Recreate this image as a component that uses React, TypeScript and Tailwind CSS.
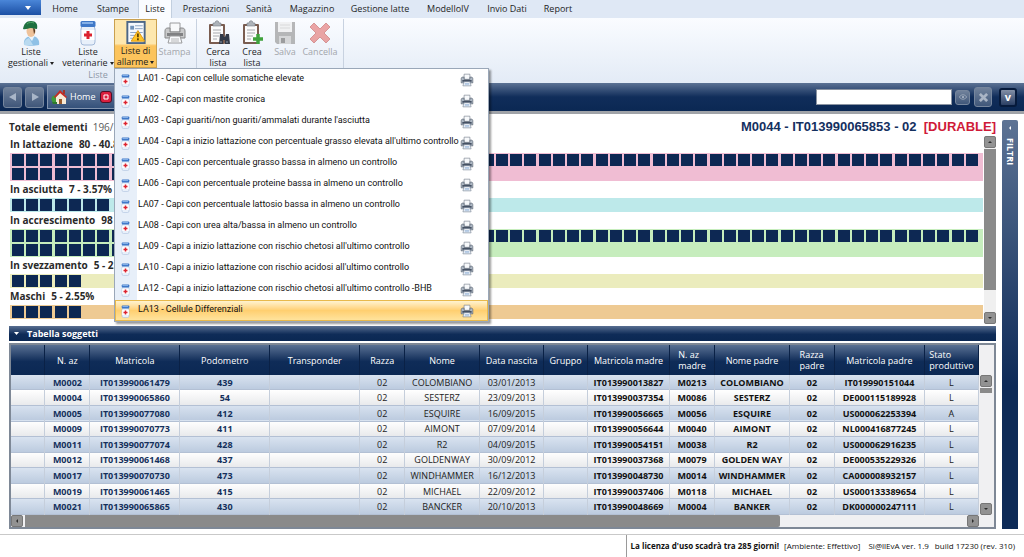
import { useState } from 'react';
import type { ReactNode } from 'react';

interface Group {
    label: string;
    stats: string;
    total: number;
    barClass: string;
}

interface Animal {
    id: string;
    tag: string;
    pedometer: string;
    name: string;
    born: string;
    damTag: string;
    damId: string;
    sire: string;
    sireTag: string;
    state: string;
}

const TABS = [
    { label: 'Home', width: 'w-[46px]' },
    { label: 'Stampe', width: 'w-[50px]' },
    { label: 'Liste', width: 'w-[34px]' },
    { label: 'Prestazioni', width: 'w-[68px]' },
    { label: 'Sanità', width: 'w-[38px]' },
    { label: 'Magazzino', width: 'w-[68px]' },
    { label: 'Gestione latte', width: 'w-[68px]' },
    { label: 'ModelloIV', width: 'w-[68px]' },
    { label: 'Invio Dati', width: 'w-[50px]' },
    { label: 'Report', width: 'w-[52px]' },
];

const ALERT_LISTS = [
    'LA01 - Capi con cellule somatiche elevate',
    'LA02 - Capi con mastite cronica',
    "LA03 - Capi guariti/non guariti/ammalati durante l'asciutta",
    "LA04 - Capi a inizio lattazione con percentuale grasso elevata all'ultimo controllo",
    'LA05 - Capi con percentuale grasso bassa in almeno un controllo',
    'LA06 - Capi con percentuale proteine bassa in almeno un controllo',
    'LA07 - Capi con percentuale lattosio bassa in almeno un controllo',
    'LA08 - Capi con urea alta/bassa in almeno un controllo',
    "LA09 - Capi a inizio lattazione con rischio chetosi all'ultimo controllo",
    "LA10 - Capi a inizio lattazione con rischio acidosi all'ultimo controllo",
    "LA12 - Capi a inizio lattazione con rischio chetosi all'ultimo controllo -BHB",
    'LA13 - Cellule Differenziali',
];

const GROUPS: Group[] = [
    { label: 'In lattazione', stats: '80 - 40.82%', total: 80, barClass: 'bg-[#f0bdd3]' },
    { label: 'In asciutta', stats: '7 - 3.57%', total: 7, barClass: 'bg-[#bde9ea]' },
    { label: 'In accrescimento', stats: '98 - 50%', total: 98, barClass: 'bg-[#c6edbd]' },
    { label: 'In svezzamento', stats: '5 - 2.55%', total: 5, barClass: 'bg-[#ebecbd]' },
    { label: 'Maschi', stats: '5 - 2.55%', total: 5, barClass: 'bg-[#eeca93]' },
];

const COLUMNS = [
    { label: '', width: 'w-[34px]' },
    { label: 'N. az', width: 'w-[45px]' },
    { label: 'Matricola', width: 'w-[90px]' },
    { label: 'Podometro', width: 'w-[90px]' },
    { label: 'Transponder', width: 'w-[90px]' },
    { label: 'Razza', width: 'w-[45px]' },
    { label: 'Nome', width: 'w-[75px]' },
    { label: 'Data nascita', width: 'w-[64px]' },
    { label: 'Gruppo', width: 'w-[44px]' },
    { label: 'Matricola madre', width: 'w-[82px]' },
    { label: 'N. az\nmadre', width: 'w-[45px]' },
    { label: 'Nome padre', width: 'w-[75px]' },
    { label: 'Razza\npadre', width: 'w-[45px]' },
    { label: 'Matricola padre', width: 'w-[90px]' },
    { label: 'Stato\nproduttivo', width: 'w-[54px]' },
];

const ANIMALS: Animal[] = [
    { id: 'M0002', tag: 'IT013990061479', pedometer: '439', name: 'COLOMBIANO', born: '03/01/2013', damTag: 'IT013990013827', damId: 'M0213', sire: 'COLOMBIANO', sireTag: 'IT019990151044', state: 'L' },
    { id: 'M0004', tag: 'IT013990065860', pedometer: '54', name: 'SESTERZ', born: '23/09/2013', damTag: 'IT013990037354', damId: 'M0086', sire: 'SESTERZ', sireTag: 'DE000115189928', state: 'L' },
    { id: 'M0005', tag: 'IT013990077080', pedometer: '412', name: 'ESQUIRE', born: '16/09/2015', damTag: 'IT013990056665', damId: 'M0056', sire: 'ESQUIRE', sireTag: 'US000062253394', state: 'A' },
    { id: 'M0009', tag: 'IT013990070773', pedometer: '411', name: 'AIMONT', born: '07/09/2014', damTag: 'IT013990056644', damId: 'M0040', sire: 'AIMONT', sireTag: 'NL000416877245', state: 'L' },
    { id: 'M0011', tag: 'IT013990077074', pedometer: '428', name: 'R2', born: '04/09/2015', damTag: 'IT013990054151', damId: 'M0038', sire: 'R2', sireTag: 'US000062916235', state: 'L' },
    { id: 'M0012', tag: 'IT013990061468', pedometer: '437', name: 'GOLDENWAY', born: '30/09/2012', damTag: 'IT013990037368', damId: 'M0079', sire: 'GOLDEN WAY', sireTag: 'DE000535229326', state: 'L' },
    { id: 'M0017', tag: 'IT013990070730', pedometer: '473', name: 'WINDHAMMER', born: '16/12/2013', damTag: 'IT013990048730', damId: 'M0014', sire: 'WINDHAMMER', sireTag: 'CA000008932157', state: 'L' },
    { id: 'M0019', tag: 'IT013990061465', pedometer: '415', name: 'MICHAEL', born: '22/09/2012', damTag: 'IT013990037406', damId: 'M0118', sire: 'MICHAEL', sireTag: 'US000133389654', state: 'L' },
    { id: 'M0021', tag: 'IT013990065865', pedometer: '430', name: 'BANCKER', born: '20/10/2013', damTag: 'IT013990048669', damId: 'M0004', sire: 'BANKER', sireTag: 'DK000000247111', state: 'L' },
];

function FarmerIcon() {
    return (
        <svg viewBox="0 0 24 26" className="h-[26px] w-6">
            <path d="M5 25c-1-6 3-9 8-9s8 4 7 9c-4 1-11 1-15 0z" fill="#8fc1e6" />
            <path d="M9 16l4 5 3-6z" fill="#eef5fb" />
            <path d="M5 25c0-4 2-6 5-7l4 7z" fill="#b9daf0" />
            <ellipse cx="12" cy="11" rx="4.5" ry="6" fill="#eec29a" />
            <path d="M14 8c2 0 3 3 1 6z" fill="#5a3a22" />
            <path d="M4 9C5 4 7 1 12 1c5 0 7 3 6 8-3 0-4-1-6-1-3 0-5 2-8 1z" fill="#1e7040" />
            <path d="M8 4c2-2 5-2 7-1" stroke="#4fa468" fill="none" />
        </svg>
    );
}

function PillsIcon({ className }: { className: string }) {
    return (
        <svg viewBox="0 0 18 26" className={className}>
            <rect x="2" y="6" width="14" height="19" rx="3" fill="#e8f0fa" stroke="#a3b9d9" />
            <rect x="1.5" y="1" width="15" height="6" rx="1.5" fill="#3f78c8" />
            <path d="M3 3h11" stroke="#9cc3f2" strokeWidth="1.5" />
            <rect x="2.5" y="10" width="13" height="10" fill="#fff" />
            <path d="M9 11v8M5 15h8" stroke="#dc2430" strokeWidth="3" />
        </svg>
    );
}

function AlertListIcon() {
    return (
        <svg viewBox="0 0 22 26" className="h-[26px] w-[22px]">
            <rect x="2" y="2" width="18" height="22" fill="#f6f9fd" stroke="#4c6787" strokeWidth="2" />
            <path d="M5 6h4v4H5z" fill="#7193ba" />
            <path d="M10 6h8M10 9h8M5 13h13M5 16h6M5 19h5" stroke="#8ba4c3" />
            <path d="M13 11l7 11H6z" fill="#ffc529" stroke="#df9710" strokeLinejoin="round" />
            <path d="M13 14v4M13 19v2" stroke="#4b3200" strokeWidth="1.6" />
        </svg>
    );
}

function PrinterIcon({ className }: { className: string }) {
    return (
        <svg viewBox="0 0 24 24" className={className}>
            <path d="M7 2h10v9H7z" fill="#f7f9fb" stroke="#6c7583" />
            <path d="M2 10c0-2 1-3 3-3h2v4h10V7h2c2 0 3 1 3 3v7H2z" fill="#aeb8c4" stroke="#505a68" />
            <path d="M4 12h16v3H4z" fill="#455163" />
            <path d="M7 15h10l2 7H5z" fill="#fafcff" stroke="#68778a" />
            <path d="M8 18h8M8 20h8" stroke="#7ca0cc" />
        </svg>
    );
}

function ClipboardIcon({ badge }: { badge: 'find' | 'add' }) {
    return (
        <svg viewBox="0 0 24 26" className="h-[26px] w-6">
            <rect x="3" y="4" width="16" height="20" rx="1" fill="#7a5d50" />
            <rect x="5" y="6" width="12" height="16" fill="#fbfbfb" />
            <path d="M7 6V3h2c0-3 4-3 4 0h2v3z" fill="#adb3b9" stroke="#7a7f86" strokeWidth=".6" />
            <path d="M7 10h8M7 13h8M7 16h6M7 19h4" stroke="#a7a9ae" />
            {badge === 'find' ? (
                <g fill="#333a47">
                    <path d="M14 14h3l1 3h1l1-3h3l1 10h-5v-4h-2v4h-4z" />
                    <path d="M14 22h2M20 22h2" stroke="#8b98aa" />
                </g>
            ) : (
                <path d="M18 14v10M13 19h10" stroke="#3fa23c" strokeWidth="3.5" />
            )}
        </svg>
    );
}

function SaveIcon() {
    return (
        <svg viewBox="0 0 22 24" className="my-px h-6 w-[22px]">
            <path d="M1 1h20v22H3l-2-2z" fill="#9b9b9b" />
            <path d="M4 1h14v10H4z" fill="#eee" />
            <path d="M6 4h10M6 7h10" stroke="#ccc" />
            <path d="M5 15h12v8H5z" fill="#c9c9c9" />
            <path d="M7 17h4v5H7z" fill="#777" />
        </svg>
    );
}

function CancelIcon() {
    return (
        <svg viewBox="0 0 22 24" className="my-px h-6 w-[22px]">
            <path d="M5 2l6 6 6-6 4 4-6 6 6 6-4 4-6-6-6 6-4-4 6-6-6-6z" fill="#e58180" stroke="#c96b6a" strokeLinejoin="round" />
        </svg>
    );
}

function HouseIcon() {
    return (
        <svg viewBox="0 0 16 16" className="h-4 w-4">
            <circle cx="4" cy="10" r="3.5" fill="#3f9c38" />
            <path d="M5 8l5-5 5 5v7H5z" fill="#f6ead6" />
            <path d="M3 8l6-7 7 7-1 1-6-5-5 5z" fill="#c82b22" />
            <path d="M12 1h2v4h-2z" fill="#a2342b" />
            <path d="M8 10h3v5H8z" fill="#9a5a2b" />
            <path d="M1 13h5v2H2z" fill="#2e7a2c" />
        </svg>
    );
}

interface RibbonButtonProps {
    icon: ReactNode;
    lines: string[];
    width: string;
    dropdown?: boolean;
    disabled?: boolean;
}

function RibbonButton({ icon, lines, width, dropdown, disabled }: RibbonButtonProps) {
    return (
        <button
            type="button"
            disabled={disabled}
            className={`flex flex-col items-center text-[9px] leading-[11px] whitespace-nowrap disabled:text-[#a3a6ab] ${width}`}
        >
            <span className={`mt-px ${disabled ? 'opacity-70' : ''}`}>{icon}</span>
            {lines.map((line, index) => (
                <span key={line}>
                    {line}
                    {dropdown && index === lines.length - 1 && <Caret />}
                </span>
            ))}
        </button>
    );
}

function Caret() {
    return (
        <svg viewBox="0 0 4 3" className="mb-px ml-[2px] inline h-[3px] w-1">
            <path d="M0 0h4L2 3z" fill="#222" />
        </svg>
    );
}

function AlertMenu() {
    const [open, setOpen] = useState(true);

    return (
        <div className="relative w-[43px]">
            <button
                type="button"
                aria-expanded={open}
                onClick={() => setOpen(!open)}
                className="flex h-[49px] w-full flex-col items-center border border-[#c9a04f] bg-linear-to-b from-[#fde7ae] from-50% to-[#fcc45c] to-55% text-[9px] leading-[11px] whitespace-nowrap"
            >
                <AlertListIcon />
                <span>Liste di</span>
                <span>allarme<Caret /></span>
            </button>
            {open && (
                <ul className="absolute top-[49px] left-0 z-10 w-[375px] border border-[#9aa7b8] bg-linear-to-r from-[#e7eff9] from-[22px] to-white to-[22px] font-['Roboto','Open_Sans',sans-serif] text-[#111] shadow-[2px_2px_2px_#00000066]">
                    {ALERT_LISTS.map((item, index) => (
                        <li key={item}>
                            <button
                                type="button"
                                className={`flex h-[21px] w-full items-center text-left text-[9px] whitespace-nowrap ${
                                    index === ALERT_LISTS.length - 1
                                        ? 'border border-[#e8b94b] bg-linear-to-b from-[#fff3d0] via-[#ffcf70] to-[#ffe39c] pr-[13px] pl-[5px]'
                                        : 'pr-[14px] pl-[6px]'
                                }`}
                            >
                                <PillsIcon className="mt-[2px] h-[13px] w-[9px] shrink-0" />
                                <span className="ml-2 flex-1 pb-[2px]">{item}</span>
                                <PrinterIcon className="h-[14px] w-[14px] shrink-0" />
                            </button>
                        </li>
                    ))}
                </ul>
            )}
        </div>
    );
}

function Ribbon() {
    return (
        <div className="flex h-[65px] bg-linear-to-b from-[#fafcff] to-[#e3ebf6] pt-px">
            <div className="flex w-[197px] flex-col border-r border-[#c8d2e0]">
                <div className="flex h-[50px]">
                    <RibbonButton icon={<FarmerIcon />} lines={['Liste', 'gestionali']} width="w-[62px]" dropdown />
                    <RibbonButton icon={<PillsIcon className="h-[26px] w-[18px]" />} lines={['Liste', 'veterinarie']} width="w-[52px]" dropdown />
                    <AlertMenu />
                    <RibbonButton icon={<PrinterIcon className="h-[26px] w-6 grayscale" />} lines={['Stampa']} width="w-[35px]" disabled />
                </div>
                <span className="text-center text-[9px] leading-3 text-[#8e98a6]">Liste</span>
            </div>
            <div className="flex w-[147px] border-r border-[#c8d2e0] pl-[4px]">
                <RibbonButton icon={<ClipboardIcon badge="find" />} lines={['Cerca', 'lista']} width="w-[34px]" />
                <RibbonButton icon={<ClipboardIcon badge="add" />} lines={['Crea', 'lista']} width="w-[34px]" />
                <RibbonButton icon={<SaveIcon />} lines={['Salva']} width="w-[32px]" disabled />
                <RibbonButton icon={<CancelIcon />} lines={['Cancella']} width="w-[38px]" disabled />
            </div>
        </div>
    );
}

function NavBar() {
    const square = 'flex items-center justify-center rounded-[3px] border border-[#76869d] bg-linear-to-b from-[#71829b] to-[#40577a]';

    return (
        <div className="flex h-[31px] items-center border-b-[3px] border-[#a0a3a8] bg-linear-to-b from-[#5c7294] via-[#102d5a] via-50% to-[#0b2853] pr-[7px] pl-[3px]">
            <button type="button" aria-label="Indietro" className={`${square} h-[21px] w-[19px]`}>
                <svg viewBox="0 0 8 8" className="h-2 w-2"><path d="M7 0v8L0 4z" fill="#a9b6c8" /></svg>
            </button>
            <button type="button" aria-label="Avanti" className={`${square} ml-[3px] h-[21px] w-[19px]`}>
                <svg viewBox="0 0 8 8" className="h-2 w-2"><path d="M1 0v8l7-4z" fill="#a9b6c8" /></svg>
            </button>
            <div className="ml-[3px] flex h-[24px] w-[84px] items-center border border-[#8495af] bg-linear-to-b from-[#6e83a2] to-[#35517a] pl-[3px] text-[9px] text-white">
                <HouseIcon />
                <a href="#home" className="ml-[3px]">Home</a>
                <button type="button" aria-label="Chiudi Home" className="ml-[5px] flex h-3 w-3 items-center justify-center rounded-[3px] border border-[#4b1026] bg-[#d91f3e]">
                    <svg viewBox="0 0 6 6" className="h-[6px] w-[6px]"><path d="M1 1h4v4H1z" fill="none" stroke="#fff" /></svg>
                </button>
            </div>
            <input
                type="text"
                aria-label="Cerca"
                className="ml-auto h-4 w-[136px] border border-[#8b94a2] bg-white px-1 text-[9px]"
            />
            <button type="button" aria-label="Mostra" className={`${square} ml-[3px] h-[15px] w-[15px]`}>
                <svg viewBox="0 0 12 8" className="h-[6px] w-[10px]">
                    <path d="M1 4c3-4 7-4 10 0-3 4-7 4-10 0z" fill="none" stroke="#a8b3c3" />
                    <circle cx="6" cy="4" r="1.5" fill="#a8b3c3" />
                </svg>
            </button>
            <button type="button" aria-label="Annulla" className={`${square} ml-[4px] h-[20px] w-[18px]`}>
                <svg viewBox="0 0 10 10" className="h-[9px] w-[9px]"><path d="M1 1l8 8M9 1L1 9" stroke="#aab5c5" strokeWidth="3" /></svg>
            </button>
            <button type="button" className="ml-[7px] flex h-[19px] w-[18px] items-center justify-center rounded-[3px] border-2 border-[#061a3b] bg-linear-to-b from-[#8390a7] to-[#2b3f64] text-[11px] font-bold text-white">
                v
            </button>
        </div>
    );
}

function HerdGroup({ group }: { group: Group }) {
    return (
        <section>
            <h3 className="flex h-[17px] items-center gap-[6px] text-[10px] font-bold whitespace-pre text-[#2a2a2a]">
                <span>{group.label}</span>
                <span>{group.stats}</span>
            </h3>
            <div className={`grid grid-cols-[repeat(68,minmax(0,1fr))] pr-[3px] pl-[2px] ${group.barClass}`}>
                {Array.from({ length: group.total }, (_, index) => (
                    <span key={index} className="my-px h-3 w-3 bg-[#0d2853]" />
                ))}
            </div>
        </section>
    );
}

function ScrollButton({ label, path }: { label: string; path: string }) {
    return (
        <button type="button" aria-label={label} className="flex h-3 w-3 shrink-0 items-center justify-center rounded-[2px] border border-[#777] bg-[#929292]">
            <svg viewBox="0 0 4 4" className="h-1 w-1"><path d={path} fill="#2d2d2d" /></svg>
        </button>
    );
}

const UP = 'M0 3h4L2 1z';
const DOWN = 'M0 1h4L2 3z';
const LEFT = 'M3 0v4L1 2z';
const RIGHT = 'M1 0v4l2-2z';

function AnimalTable() {
    return (
        <div className="border-2 border-[#7e8896] bg-[#f0f0f2]">
            <div className="flex">
                <table className="h-[170px] flex-1 table-fixed border-collapse text-center text-[9px] leading-[11px]">
                    <thead>
                        <tr className="h-[30px] bg-linear-to-b from-[#5a7193] via-[#0f2c58] via-55% to-[#0b2853] text-white">
                            {COLUMNS.map(column => (
                                <th key={column.label} scope="col" className={`border-r border-[#0a2146] p-0 font-normal ${column.width}`}>
                                    <span className="inline-block text-left align-middle whitespace-pre">{column.label}</span>
                                </th>
                            ))}
                        </tr>
                    </thead>
                    <tbody>
                        {ANIMALS.map(animal => (
                            <tr
                                key={animal.id}
                                className="border-b border-[#b3c0d4] bg-linear-to-b from-white to-[#e9eaec] text-[#222] odd:from-[#d9e3f0] odd:to-[#bccbdf] *:border-r *:border-[#c5cedb] *:p-0"
                            >
                                <td />
                                <td className="font-bold text-[#14305c]">{animal.id}</td>
                                <td className="font-bold text-[#14305c]">{animal.tag}</td>
                                <td className="font-bold text-[#14305c]">{animal.pedometer}</td>
                                <td />
                                <td>02</td>
                                <td>{animal.name}</td>
                                <td>{animal.born}</td>
                                <td />
                                <td className="font-bold text-[#111]">{animal.damTag}</td>
                                <td className="font-bold text-[#111]">{animal.damId}</td>
                                <td className="font-bold text-[#111]">{animal.sire}</td>
                                <td className="font-bold text-[#111]">02</td>
                                <td className="font-bold text-[#111]">{animal.sireTag}</td>
                                <td>{animal.state}</td>
                            </tr>
                        ))}
                    </tbody>
                </table>
                <div className="flex w-[15px] flex-col pt-[30px] pl-px">
                    <ScrollButton label="Riga precedente" path={UP} />
                    <span className="mt-px h-[5px] w-3 bg-[#8a8a8a]" />
                    <span className="flex-1" />
                    <ScrollButton label="Riga successiva" path={DOWN} />
                </div>
            </div>
            <div className="flex h-[12px] items-center pr-[15px]">
                <ScrollButton label="Colonna precedente" path={LEFT} />
                <span className="ml-[2px] h-3 w-[78%] rounded-r-[2px] bg-[#8a8a8a]" />
                <span className="flex-1" />
                <ScrollButton label="Colonna successiva" path={RIGHT} />
            </div>
        </div>
    );
}

export default function App() {
    return (
        <div className="flex min-h-screen flex-col bg-white font-['Open_Sans','Noto_Sans',sans-serif] text-[#1e1e1e]">
            <nav className="flex h-[18px] bg-[#dfe8f5]">
                <button type="button" aria-label="File" className="mr-px flex h-[15px] w-[41px] items-center justify-end bg-linear-to-b from-[#4a86d8] to-[#1b4fa4] pr-[10px]">
                    <svg viewBox="0 0 6 4" className="h-1 w-[6px]"><path d="M0 0h6L3 4z" fill="#fff" /></svg>
                </button>
                {TABS.map(tab => (
                    <button
                        key={tab.label}
                        type="button"
                        className={`flex items-center justify-center text-[9px] whitespace-nowrap ${tab.width} ${
                            tab.label === 'Liste' ? 'border-x border-[#c2cfdf] bg-[#fafcff]' : ''
                        }`}
                    >
                        {tab.label}
                    </button>
                ))}
            </nav>
            <Ribbon />
            <NavBar />

            <main className="flex flex-1 gap-[6px] pr-[6px] pl-[9px]">
                <div className="min-w-0 flex-1">
                    <header className="flex h-[22px] items-center justify-between pt-1">
                        <p className="text-[10px] whitespace-pre text-[#5a5a5a]">
                            <b className="text-[#2a2a2a]">Totale elementi</b>  196/196
                        </p>
                        <h1 className="font-['Liberation_Sans',Arial,sans-serif] text-[13px] font-bold whitespace-pre text-[#14305f]">
                            M0044 - IT013990065853 - 02  <span className="text-[#cf1a37]">[DURABLE]</span>
                        </h1>
                    </header>
                    {/* Herd composition */}
                    <div className="flex pl-px">
                        <div className="flex-1 pb-[7px]">
                            {GROUPS.map(group => (
                                <HerdGroup key={group.label} group={group} />
                            ))}
                        </div>
                        <div className="mb-[2px] ml-px flex w-3 flex-col bg-[#f0f0f0]">
                            <ScrollButton label="Su" path={UP} />
                            <span className="mt-px flex-1 bg-[#8a8a8a]" />
                            <span className="h-[22px]" />
                            <ScrollButton label="Giù" path={DOWN} />
                        </div>
                    </div>

                    <button type="button" className="mb-[2px] flex h-[15px] w-full items-center gap-[8px] bg-linear-to-b from-[#596f91] via-[#0f2c58] via-55% to-[#0b2853] pl-[5px] text-[9px] font-bold text-white">
                        <svg viewBox="0 0 5 3" className="h-[3px] w-[5px]"><path d="M0 0h5L2.5 3z" fill="#fff" /></svg>
                        Tabella soggetti
                    </button>
                    <AnimalTable />
                </div>
                <button type="button" className="mt-[6px] mb-[5px] flex w-4 flex-col items-center gap-2 rounded-t-[2px] bg-linear-to-b from-[#5d7394] to-[#0d2a57] to-65% pt-[6px] text-[9px] font-bold text-white">
                    <svg viewBox="0 0 4 4" className="h-1 w-1"><path d="M3 0v4L1 2z" fill="#fff" /></svg>
                    <span className="[writing-mode:vertical-rl]">FILTRI</span>
                </button>
            </main>

            <footer className="flex h-[23px] justify-end border-t border-[#c9c9c9] pr-[9px] text-[8px] text-[#111]">
                <p className="flex items-center border-l border-[#9a9a9a] pl-1 whitespace-pre">
                    <b>La licenza d'uso scadrà tra 285 giorni!</b>
                    <span className="ml-[5px]">[Ambiente: Effettivo]</span>
                    <span className="ml-2">Si@llEvA ver. 1.9</span>
                    <span className="ml-[6px]">build 17230 (rev. 310)</span>
                </p>
            </footer>
        </div>
    );
}
